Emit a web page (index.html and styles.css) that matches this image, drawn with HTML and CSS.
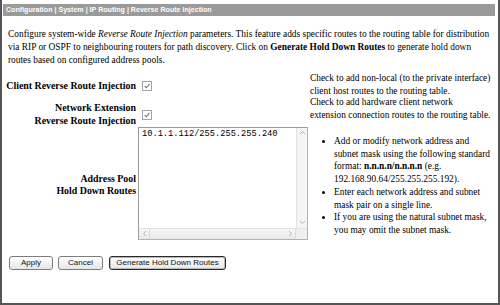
FILE: index.html
```html
<!DOCTYPE html>
<html>
<head>
<meta charset="utf-8">
<link rel="stylesheet" href="styles.css">
</head>
<body>
<div class="frame">
  <div class="titlebar">Configuration | System | IP Routing | Reverse Route Injection</div>
  <p class="intro">Configure system-wide <i>Reverse Route Injection</i> parameters. This feature adds specific routes to the routing table for distribution via RIP or OSPF to neighbouring routers for path discovery. Click on <b>Generate Hold Down Routes</b> to generate hold down<br>routes based on configured address pools.</p>

  <div class="row row1">
    <div class="label l1">Client Reverse Route Injection</div>
    <div class="ctrl"><span class="cb c1"><svg width="10" height="10" viewBox="0 0 10 10"><rect x="0.5" y="0.5" width="9" height="9" fill="#fff" stroke="#a4a4a4"/><path d="M2.6 5.1 L4.3 6.8 L7.4 3.2" fill="none" stroke="#707070" stroke-width="1.1"/></svg></span></div>
    <div class="help h1">Check to add non-local (to the private interface) client host routes to the routing table.</div>
  </div>

  <div class="row row2">
    <div class="label l2">Network Extension<br>Reverse Route Injection</div>
    <div class="ctrl"><span class="cb c2"><svg width="10" height="10" viewBox="0 0 10 10"><rect x="0.5" y="0.5" width="9" height="9" fill="#fff" stroke="#a4a4a4"/><path d="M2.6 5.1 L4.3 6.8 L7.4 3.2" fill="none" stroke="#707070" stroke-width="1.1"/></svg></span></div>
    <div class="help h2">Check to add hardware client network<br>extension connection routes to the routing table.</div>
  </div>

  <div class="row row3">
    <div class="label l3">Address Pool<br>Hold Down Routes</div>
    <div class="ctrl">
      <div class="ta">
        <div class="ta-main">
          <div class="ta-text">10.1.1.112/255.255.255.240</div>
          <div class="vscroll">
            <span class="arrow"><svg width="7" height="5" viewBox="0 0 7 5"><path d="M1 4 L3.5 1.5 L6 4" fill="none" stroke="#b0b0b0"/></svg></span>
            <span class="track"></span>
            <span class="arrow"><svg width="7" height="5" viewBox="0 0 7 5"><path d="M1 1 L3.5 3.5 L6 1" fill="none" stroke="#b0b0b0"/></svg></span>
          </div>
        </div>
        <div class="hscroll">
          <span class="arrow"><svg width="5" height="7" viewBox="0 0 5 7"><path d="M4 1 L1.5 3.5 L4 6" fill="none" stroke="#b0b0b0"/></svg></span>
          <span class="track"></span>
          <span class="arrow"><svg width="5" height="7" viewBox="0 0 5 7"><path d="M1 1 L3.5 3.5 L1 6" fill="none" stroke="#b0b0b0"/></svg></span>
          <span class="corner"></span>
        </div>
      </div>
    </div>
    <div class="help">
      <ul>
        <li>Add or modify network address and subnet mask using the following standard format: <b>n.n.n.n/n.n.n.n</b> (e.g. 192.168.90.64/255.255.255.192).</li>
        <li>Enter each network address and subnet mask pair on a single line.</li>
        <li>If you are using the natural subnet mask, you may omit the subnet mask.</li>
      </ul>
    </div>
  </div>

  <div class="buttons">
    <span class="btn b-apply">Apply</span>
    <span class="btn b-cancel">Cancel</span>
    <span class="btn b-gen">Generate Hold Down Routes</span>
  </div>
</div>
</body>
</html>
```

FILE: styles.css
```css
html, body {
  margin: 0;
  padding: 0;
  background: #fff;
}
.frame {
  box-sizing: border-box;
  width: 500px;
  height: 305px;
  border-left: 2px solid #555;
  border-right: 2px solid #555;
  border-bottom: 2px solid #555;
  padding-top: 4px;
  font-family: "Liberation Serif", "Times New Roman", serif;
  font-size: 9.4px;
  line-height: 12.75px;
  color: #000;
  overflow: hidden;
}
.titlebar {
  margin: 0 3px 0 1px;
  height: 12px;
  line-height: 12px;
  background: #9a9a9a;
  color: #fff;
  font-family: "Liberation Sans", Arial, sans-serif;
  font-weight: bold;
  font-size: 7.1px;
  padding-left: 3px;
}
.intro {
  margin: 12px 8px 0 6px;
}
.row {
  display: flex;
  align-items: flex-start;
}
.label {
  width: 134px;
  flex: none;
  text-align: right;
  font-weight: bold;
  font-size: 9.9px;
}
.ctrl {
  width: 172px;
  flex: none;
  padding-left: 2px;
  box-sizing: border-box;
}
.help {
  flex: 1;
  padding-left: 2px;
  padding-right: 4px;
}
.row1 {
  margin-top: 5px;
  height: 23.5px;
}
.h1 { padding-top: 1px; }
.h2 { padding-top: 1px; }
.l1 { padding-top: 8.5px; }
.cb { display: block; width: 10px; height: 10px; margin-left: 4px; }
.cb svg { display: block; }
.c1 { margin-top: 9.5px; }
.row2 { height: 32px; }
.l2 { padding-top: 7px; }
.c2 { margin-top: 15px; }
.row3 { height: 113px; align-items: stretch; }
.l3 { align-self: center; padding-top: 4px; }
.ta {
  box-sizing: border-box;
  width: 170px;
  height: 113px;
  border: 1px solid #b4b4b4;
  border-top-color: #9c9c9c;
  border-left-color: #9c9c9c;
  display: flex;
  flex-direction: column;
  background: #fff;
}
.ta-main {
  flex: 1;
  display: flex;
}
.ta-text {
  flex: 1;
  font-family: "Liberation Mono", "Courier New", monospace;
  font-size: 8.7px;
  line-height: 11px;
  padding: 1px 0 0 3px;
}
.vscroll {
  width: 10px;
  display: flex;
  flex-direction: column;
  background: #f4f4f4;
  border-left: 1px solid #e2e2e2;
}
.hscroll {
  height: 10px;
  display: flex;
  background: linear-gradient(#f8f8f8, #e8e8e8);
  border-top: 1px solid #e2e2e2;
}
.arrow {
  display: flex;
  align-items: center;
  justify-content: center;
  flex: none;
}
.vscroll .arrow { height: 10px; }
.hscroll .arrow { width: 10px; }
.hscroll .arrow:first-child { border-right: 1px solid #dcdcdc; }
.track { flex: 1; }
.corner {
  width: 11px;
  flex: none;
  background: #efefef;
  border-left: 1px solid #dcdcdc;
}
.help ul {
  margin: 8px 0 0 0;
  padding-left: 24px;
}
.help li { padding-left: 0; }
.buttons {
  display: flex;
  gap: 5px;
  margin: 16px 0 0 7px;
}
.btn {
  box-sizing: border-box;
  height: 14px;
  line-height: 12px;
  border: 1px solid #7c7c7c;
  border-radius: 3px;
  background: linear-gradient(#ffffff, #e6e6e6);
  font-family: "Liberation Sans", Arial, sans-serif;
  font-size: 8px;
  text-align: center;
  color: #111;
}
.b-apply { width: 44px; }
.b-cancel { width: 45px; margin-left: 0; }
.b-gen {
  width: 117px;
  margin-left: 1px;
  border-color: #2a2a2a;
  box-shadow: inset 0 0 0 1px #b8b8b8;
}
```
